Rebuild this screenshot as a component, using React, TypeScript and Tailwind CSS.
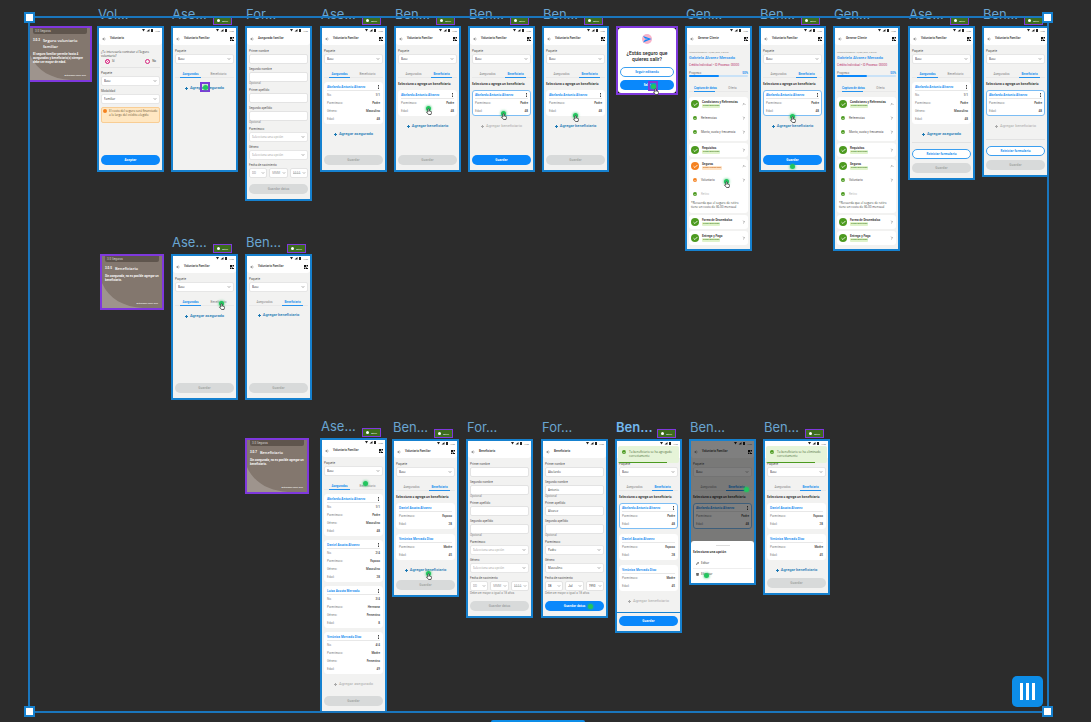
import { useId } from "react";
import type { ReactNode } from "react";
import clsx from "clsx";
import { ArrowLeft, Check, ChevronDown, ChevronRight, ChevronUp, Pencil, Trash2 } from "lucide-react";

type Person = { name: string; rows: [string, string][] };

const insured: Person[] = [
  { name: "Abelardo Antonio Alvarez", rows: [["No.", "1/1"], ["Parentesco:", "Padre"], ["Género:", "Masculino"], ["Edad:", "48"]] },
  { name: "Daniel Acosta Alvarez", rows: [["No.", "2/4"], ["Parentesco:", "Esposo"], ["Género:", "Masculino"], ["Edad:", "28"]] },
  { name: "Luisa Acosta Mercado", rows: [["No.", "3/4"], ["Parentesco:", "Hermana"], ["Género:", "Femenino"], ["Edad:", "8"]] },
  { name: "Verónica Mercado Diaz", rows: [["No.", "4/4"], ["Parentesco:", "Madre"], ["Género:", "Femenino"], ["Edad:", "49"]] },
];

const abelardo: Person = { name: "Abelardo Antonio Alvarez", rows: [["Parentesco:", "Padre"], ["Edad:", "48"]] };
const daniel: Person = { name: "Daniel Acosta Alvarez", rows: [["Parentesco:", "Esposo"], ["Edad:", "28"]] };
const veronica: Person = { name: "Verónica Mercado Diaz", rows: [["Parentesco:", "Madre"], ["Edad:", "45"]] };

function StatusBar() {
  return (
    <div className="flex h-[5px] shrink-0 items-center justify-end gap-[2px] pr-[2px] text-[2px] leading-[4px] text-[#666]">
      <svg className="h-[3px] w-[11px]" viewBox="0 0 11 3">
        <path d="M0 0h3L1.5 2.5zM4.5 2.5h3V0zM9 0h2v3H9z" fill="#222" />
      </svg>
      <span>12:30</span>
    </div>
  );
}

function Header({ title, qr = true }: { title: string; qr?: boolean }) {
  return (
    <header className="h-[17px] shrink-0 rounded-b-[3px] bg-white">
      <StatusBar />
      <div className="flex h-[11px] items-center gap-[4px] pl-[3px] pr-[2px]">
        <ArrowLeft className="size-[4px] text-black" strokeWidth={2} />
        <h2 className="flex-1 whitespace-nowrap text-[3px] font-semibold leading-[5px] text-[#444]">{title}</h2>
        {qr && (
          <svg className="size-[4px]" viewBox="0 0 8 8">
            <path d="M0 0h4v4H0zM5 0h3v3H5zM0 5h3v3H0zM4 5h2v1h2v2H4z" fill="#111" />
          </svg>
        )}
      </div>
    </header>
  );
}

function SelectField({ label, value, muted }: { label: string; value: string; muted?: boolean }) {
  const id = useId();
  return (
    <div>
      <label htmlFor={id} className="block text-[3px] leading-[5px] text-[#555]">{label}</label>
      <div className="relative">
        <select
          id={id}
          className={clsx(
            "block h-[10px] w-full appearance-none rounded-[2px] border border-[#e6e6e6] bg-white px-[2px] font-['Open_Sans',sans-serif] text-[3px] leading-[8px]",
            muted ? "text-[#999]" : "text-[#333]",
          )}
        >
          <option>{value}</option>
        </select>
        <ChevronDown className="pointer-events-none absolute right-[3px] top-[3px] size-[4px] text-[#555]" strokeWidth={3} />
      </div>
    </div>
  );
}

function TextField({ label, value = "", hint }: { label: string; value?: string; hint?: string }) {
  const id = useId();
  return (
    <div>
      <label htmlFor={id} className="block text-[3px] leading-[5px] text-[#555]">{label}</label>
      <input
        id={id}
        defaultValue={value}
        className="block h-[10px] w-full rounded-[2px] border border-[#e3e3e3] bg-white px-[2px] font-['Open_Sans',sans-serif] text-[3px] text-[#444]"
      />
      {hint && <p className="text-[3px] leading-[3px] text-[#888]">{hint}</p>}
    </div>
  );
}

function PillButton({ children, kind = "primary" }: { children: ReactNode; kind?: "primary" | "disabled" | "outline" }) {
  return (
    <button
      disabled={kind === "disabled"}
      className={clsx(
        "block h-[10px] w-full shrink-0 rounded-full font-['Open_Sans',sans-serif] text-[3px] font-bold leading-[8px]",
        kind === "primary" && "bg-[#0a88fb] text-white",
        kind === "disabled" && "bg-[#d8dada] text-[#a3a6a6]",
        kind === "outline" && "border border-[#3b9ff0] bg-white text-[#1a8eef]",
      )}
    >
      {children}
    </button>
  );
}

function AddLink({ children, muted }: { children: ReactNode; muted?: boolean }) {
  return (
    <button
      className={clsx(
        "flex w-full shrink-0 items-center justify-center gap-[2px] whitespace-nowrap text-[4px] leading-[6px]",
        muted ? "text-[#aaa]" : "font-medium text-[#1a78b4]",
      )}
    >
      <svg className="size-[3px]" viewBox="0 0 3 3">
        <path d="M1 0h1v1h1v1H2v1H1V2H0V1h1z" fill="currentColor" />
      </svg>
      {children}
    </button>
  );
}

function Tabs({ items, active }: { items: string[]; active: number }) {
  return (
    <div className="flex h-[8px] shrink-0 gap-[7px] border-b border-[#e9e9e9] px-[5px]">
      {items.map((item, i) => (
        <button
          key={item}
          className={clsx(
            "-mb-px h-[8px] min-w-0 flex-1 whitespace-nowrap border-b text-[3px] leading-[6px]",
            i === active ? "border-[#2492ee] font-bold text-[#2492ee]" : "border-transparent text-[#888]",
          )}
        >
          {item}
        </button>
      ))}
    </div>
  );
}

function PersonCard({ person, selected, menu = true }: { person: Person; selected?: boolean; menu?: boolean }) {
  return (
    <article
      className={clsx(
        "shrink-0 rounded-[3px] border bg-white px-[2px]",
        selected ? "border-[#7cbdf4]" : "border-white",
        person.rows.length === 4 ? "h-[42px]" : "h-[26px]",
      )}
    >
      <div className="flex h-[8px] items-center justify-between border-b border-[#e8e8e8]">
        <h3 className="whitespace-nowrap font-['Open_Sans',sans-serif] text-[3px] font-bold leading-[6px] text-[#1e90f0]">{person.name}</h3>
        {menu && (
          <svg className="h-[4px] w-[3px]" viewBox="0 0 3 4">
            <path d="M1 0h1v1H1zM1 1.500h1v1H1zM1 3h1v1H1z" fill="#444" />
          </svg>
        )}
      </div>
      <dl>
        {person.rows.map(([term, detail]) => (
          <div key={term} className="flex h-[8px] items-center justify-between text-[3px] leading-[6px]">
            <dt className="text-[#888]">{term}</dt>
            <dd className="font-medium text-[#444]">{detail}</dd>
          </div>
        ))}
      </dl>
    </article>
  );
}

type FamilyProps = {
  tab: 0 | 1;
  people?: Person[];
  selected?: boolean;
  menu?: boolean;
  addMuted?: boolean;
  save?: "primary" | "disabled" | "none";
  reset?: boolean;
  toast?: string;
  stickyFooter?: boolean;
  children?: ReactNode;
};

function FamilyScreen({ tab, people = [], selected, menu = true, addMuted, save = "disabled", reset, toast, stickyFooter, children }: FamilyProps) {
  const showAdd = save !== "none" || people.length === 0;
  return (
    <>
      {toast ? (
        <div className="h-[17px] shrink-0 bg-white">
          <StatusBar />
          <Toast text={toast} />
        </div>
      ) : (
        <Header title="Voluntario Familiar" />
      )}
      <div className="flex flex-1 flex-col px-[2px] pt-[4px]">
        <SelectField label="Paquete" value="Base" />
        <div className="h-[6px] shrink-0" />
        <Tabs items={["Asegurados", "Beneficiario"]} active={tab} />
        {tab === 1 && people.length > 0 && (
          <p className="mt-[4px] shrink-0 whitespace-nowrap font-['Open_Sans',sans-serif] text-[3px] font-bold leading-[5px] text-[#333]">
            Selecciona o agrega un beneficiario
          </p>
        )}
        <div className={clsx("flex shrink-0 flex-col", tab === 1 ? "gap-[5px] pt-[3px]" : "gap-[4px] pt-[4px]")}>
          {people.map((person, i) => (
            <PersonCard key={person.name} person={person} selected={selected && i === 0} menu={menu && (i === 0 || tab === 0)} />
          ))}
        </div>
        {showAdd && (
          <div className={people.length ? "mt-[7px]" : "mt-[3px]"}>
            <AddLink muted={addMuted}>{tab === 0 ? "Agregar asegurado" : "Agregar beneficiario"}</AddLink>
          </div>
        )}
        {save !== "none" && (
          <footer
            className={clsx(
              "mt-auto flex flex-col gap-[4px] pb-[5px]",
              reset && "border-t border-[#e2e2e2] pt-[6px]",
              stickyFooter && "-mx-[2px] border-t border-[#1681cf] px-[2px] pt-[3px]",
            )}
          >
            {reset && <PillButton kind="outline">Reiniciar formulario</PillButton>}
            <PillButton kind={save}>Guardar</PillButton>
          </footer>
        )}
      </div>
      {children}
    </>
  );
}

function Toast({ text }: { text: string }) {
  return (
    <div className="relative z-10 mx-px h-[17px] overflow-hidden rounded-[2px] bg-[#e6f4d8]">
      <div className="flex gap-[3px] pl-[4px] pr-px pt-[4px]">
        <CheckDot small />
        <p className="flex-1 font-['Open_Sans',sans-serif] text-[3px] leading-[4px] text-[#4d6b3a]">{text}</p>
      </div>
      <div className="absolute bottom-0 left-0 h-px w-4/5 bg-[#4c9a1f]" />
    </div>
  );
}

function VoluntaryScreen() {
  return (
    <>
      <Header title="Voluntario" qr={false} />
      <div className="flex flex-1 flex-col gap-[3px] px-[2px] pb-[5px] pt-[5px]">
        <fieldset className="h-[18px] border-b border-[#e4e4e4]">
          <legend className="font-['Open_Sans',sans-serif] text-[3px] leading-[4px] text-[#444]">¿Te interesaría contratar el Seguro voluntario?</legend>
          <div className="flex justify-between px-[4px] pt-px text-[3px] leading-[5px] text-[#444]">
            {["Sí", "No"].map((option, i) => (
              <label key={option} className="flex items-center gap-[2px]">
                <input
                  type="radio"
                  name="insurance"
                  defaultChecked={i === 0}
                  className="size-[5px] appearance-none rounded-full border border-[#d6247e] checked:bg-[#d6247e] checked:shadow-[inset_0_0_0_1px_#fff]"
                />
                {option}
              </label>
            ))}
          </div>
        </fieldset>
        <SelectField label="Paquete" value="Base" />
        <SelectField label="Modalidad" value="Familiar" />
        <div className="flex h-[16px] gap-[2px] rounded-[2px] border border-[#f8cd94] bg-[#ffe7c2] p-px">
          <span className="size-[4px] shrink-0 rounded-full bg-[#f5821f]" />
          <p className="font-['Open_Sans',sans-serif] text-[3px] leading-[4px] text-[#6b5535]">El costo del seguro será financiado a lo largo del crédito elegido</p>
        </div>
        <div className="mt-auto">
          <PillButton>Aceptar</PillButton>
        </div>
      </div>
    </>
  );
}

function FormScreen({ title, values = [], hint }: { title: string; values?: string[]; hint?: boolean }) {
  const filled = values.length > 0;
  return (
    <>
      <Header title={title} qr={false} />
      <div className="flex flex-1 flex-col gap-[3px] px-[2px] pb-[5px] pt-[4px]">
        <TextField label="Primer nombre" value={values[0]} />
        <TextField label="Segundo nombre" value={values[1]} hint="Opcional" />
        <TextField label="Primer apellido" value={values[2]} />
        <TextField label="Segundo apellido" hint="Opcional" />
        <SelectField label="Parentesco" value={values[3] ?? "Selecciona una opción"} muted={!filled} />
        <SelectField label="Género" value={values[4] ?? "Selecciona una opción"} muted={!filled} />
        <fieldset>
          <legend className="text-[3px] leading-[5px] text-[#555]">Fecha de nacimiento</legend>
          <div className="grid grid-cols-3 gap-[2px]">
            {[["Día", values[5] ?? "DD"], ["Mes", values[6] ?? "MMM"], ["Año", values[7] ?? "AAAA"]].map(([label, value]) => (
              <div key={label} className="relative">
                <select
                  aria-label={label}
                  className={clsx(
                    "block h-[10px] w-full appearance-none rounded-[2px] border border-[#e3e3e3] bg-white px-[2px] text-[3px] leading-[8px]",
                    filled ? "text-[#333]" : "text-[#999]",
                  )}
                >
                  <option>{value}</option>
                </select>
                <ChevronDown className="pointer-events-none absolute right-[2px] top-[3px] size-[4px] text-[#777]" strokeWidth={3} />
              </div>
            ))}
          </div>
          {hint && <p className="whitespace-nowrap text-[3px] leading-[4px] text-[#888]">Debe ser mayor o igual a 18 años</p>}
        </fieldset>
        <div className="mt-auto">
          <PillButton kind={filled ? "primary" : "disabled"}>Guardar datos</PillButton>
        </div>
      </div>
    </>
  );
}

function CheckDot({ small, warning }: { small?: boolean; warning?: boolean }) {
  return (
    <span
      className={clsx(
        "flex shrink-0 items-center justify-center rounded-full text-white",
        small ? "size-[4px]" : "size-[8px]",
        warning ? "bg-[#f58220]" : "bg-[#4c9a1f]",
      )}
    >
      <Check className={small ? "size-[3px]" : "size-[5px]"} strokeWidth={4} />
    </span>
  );
}

function Section({ title, warning, open, children }: { title: string; warning?: boolean; open?: boolean; children?: ReactNode }) {
  const Chevron = open ? ChevronUp : ChevronRight;
  return (
    <section className={clsx("shrink-0 rounded-[3px] bg-white px-[2px]", open && "pb-[2px]")}>
      <div className="flex h-[14px] items-center gap-[3px]">
        <CheckDot warning={warning} />
        <div className="min-w-0 flex-1">
          <h3 className="whitespace-nowrap text-[3px] font-bold leading-[4px] text-[#444]">{title}</h3>
          <span
            className={clsx(
              "block w-fit rounded-[1px] px-px font-['Open_Sans',sans-serif] text-[2px] font-semibold leading-[4px]",
              warning ? "bg-[#ffe3c4] text-[#c8640c]" : "bg-[#dff3ca] text-[#3f7d1b]",
            )}
          >
            {warning ? "Datos incompletos" : "Datos completos"}
          </span>
        </div>
        <Chevron className="size-[4px] text-[#444]" strokeWidth={3} />
      </div>
      {children}
    </section>
  );
}

function SectionRow({ label, warning, muted }: { label: string; warning?: boolean; muted?: boolean }) {
  return (
    <div className="flex h-[14px] items-center gap-[4px] pl-[2px] text-[3px] leading-[5px]">
      <CheckDot small warning={warning} />
      <span className={clsx("flex-1 whitespace-nowrap", muted ? "text-[#bbb]" : "text-[#555]")}>{label}</span>
      {!muted && <ChevronRight className="size-[4px] text-[#444]" strokeWidth={3} />}
    </div>
  );
}

function ClientScreen({ warning }: { warning?: boolean }) {
  return (
    <>
      <Header title="Generar Cliente" />
      <div className="flex flex-1 flex-col px-[2px] pt-[5px]">
        <p className="whitespace-nowrap text-[2px] leading-[4px] text-[#888]">Última actualización: 15/Mar/2023, 2:30 p.m.</p>
        <h3 className="whitespace-nowrap text-[4px] font-medium leading-[8px] text-[#1e90f0]">Gabriela Alvarez Mercado</h3>
        <p className="whitespace-nowrap text-[3px] leading-[7px] text-[#b8326f]">Crédito Individual • ID Proceso: 00000</p>
        <div className="flex justify-between pt-[2px] text-[3px] leading-[4px] text-[#777]">
          <span>Progreso</span>
          <span className="font-bold text-[#1e90f0]">50%</span>
        </div>
        <div className="mb-[7px] h-[2px] rounded-full bg-[#c9e2f7]">
          <div className="h-[2px] w-1/2 rounded-full bg-[#0a88fb]" />
        </div>
        <Tabs items={["Captura de datos", "Oferta"]} active={0} />
        <div className="flex flex-col gap-[2px] pt-[5px]">
          <Section title="Condiciones y Referencias" open>
            <SectionRow label="Referencias" />
            <SectionRow label="Monto, cuota y frecuencia" />
          </Section>
          <Section title="Requisitos" />
          <Section title="Seguros" warning={warning} open>
            <SectionRow label="Voluntario" warning={warning} />
            <SectionRow label="Retiro" muted />
            <p className="h-[10px] whitespace-nowrap font-['Open_Sans',sans-serif] text-[3px] leading-[4px] text-[#444]">
              *Recuerda que el seguro de retiro
              <br />
              tiene un costo de $6.00 mensual
            </p>
          </Section>
          <Section title="Forma de Desembolso" />
          <Section title="Entrega y Pago" />
        </div>
      </div>
    </>
  );
}

function OptionsSheet() {
  return (
    <div className="absolute inset-0 flex flex-col justify-end bg-black/50">
      <div className="h-[42px] rounded-t-[3px] bg-white px-[2px] font-['Open_Sans',sans-serif] text-[3px]">
        <div className="mx-auto mt-[4px] h-px w-[14px] bg-[#ddd]" />
        <p className="mt-[4px] font-bold leading-[5px] text-[#333]">Selecciona una opción</p>
        <button className="mt-[4px] flex h-[10px] w-full items-center gap-[2px] border-b border-[#eee] pl-[3px] text-[#333]">
          <Pencil className="size-[3px]" strokeWidth={4} /> Editar
        </button>
        <button className="flex h-[10px] w-full items-center gap-[2px] pl-[3px] text-[#333]">
          <Trash2 className="size-[3px]" strokeWidth={4} /> Eliminar
        </button>
      </div>
    </div>
  );
}

type Artboard = { label: string; x: number; y: number; h: number; badge?: boolean; active?: boolean; screen: ReactNode };

const artboards: Artboard[] = [
  { label: "Vol...", x: 97, y: 26, h: 146, screen: <VoluntaryScreen /> },
  { label: "Ase...", x: 171, y: 26, h: 146, badge: true, screen: <FamilyScreen tab={0} save="none" /> },
  { label: "For...", x: 245, y: 26, h: 175, screen: <FormScreen title="Asegurado familiar" /> },
  { label: "Ase...", x: 320, y: 26, h: 146, badge: true, screen: <FamilyScreen tab={0} people={insured.slice(0, 1)} /> },
  { label: "Ben...", x: 394, y: 26, h: 146, badge: true, screen: <FamilyScreen tab={1} people={[abelardo]} /> },
  { label: "Ben...", x: 468, y: 26, h: 146, badge: true, screen: <FamilyScreen tab={1} people={[abelardo]} selected addMuted save="primary" /> },
  { label: "Ben...", x: 542, y: 26, h: 146, badge: true, screen: <FamilyScreen tab={1} people={[abelardo]} /> },
  { label: "Gen...", x: 685, y: 26, h: 225, screen: <ClientScreen warning /> },
  { label: "Ben...", x: 759, y: 26, h: 146, badge: true, screen: <FamilyScreen tab={1} people={[abelardo]} selected save="primary" /> },
  { label: "Gen...", x: 833, y: 26, h: 225, screen: <ClientScreen /> },
  { label: "Ase...", x: 908, y: 26, h: 154, badge: true, screen: <FamilyScreen tab={0} people={insured.slice(0, 1)} reset /> },
  { label: "Ben...", x: 982, y: 26, h: 151, badge: true, screen: <FamilyScreen tab={1} people={[abelardo]} selected addMuted reset /> },
  { label: "Ase...", x: 171, y: 254, h: 146, badge: true, screen: <FamilyScreen tab={0} /> },
  { label: "Ben...", x: 245, y: 254, h: 146, badge: true, screen: <FamilyScreen tab={1} /> },
  { label: "Ase...", x: 320, y: 438, h: 275, badge: true, screen: <FamilyScreen tab={0} people={insured} addMuted /> },
  { label: "Ben...", x: 392, y: 439, h: 158, badge: true, screen: <FamilyScreen tab={1} people={[daniel, veronica]} menu={false} /> },
  { label: "For...", x: 466, y: 439, h: 179, screen: <FormScreen title="Beneficiario" hint /> },
  { label: "For...", x: 541, y: 439, h: 179, screen: <FormScreen title="Beneficiario" values={["Abelardo", "Antonio", "Alvarez", "Padre", "Masculino", "08", "Jul", "1993"]} hint /> },
  { label: "Ben...", x: 615, y: 439, h: 194, badge: true, active: true, screen: <FamilyScreen tab={1} people={[abelardo, daniel, veronica]} selected addMuted save="primary" stickyFooter toast="Tu beneficiario se ha agregado correctamente" /> },
  { label: "Ben...", x: 689, y: 439, h: 146, screen: <FamilyScreen tab={1} people={[abelardo]} selected save="none"><OptionsSheet /></FamilyScreen> },
  { label: "Ben...", x: 763, y: 439, h: 156, badge: true, screen: <FamilyScreen tab={1} people={[daniel, veronica]} menu={false} toast="Tu beneficiario se ha eliminado correctamente" /> },
];

const notes = [
  { x: 28, y: 26, number: "3.0.3", title: "Seguro voluntario familiar", text: "El seguro familiar permite hasta 4 asegurados y beneficiario(s) siempre debe ser mayor de edad." },
  { x: 100, y: 254, number: "3.0.5", title: "Beneficiario", text: "Sin asegurado, no es posible agregar un beneficiario." },
  { x: 245, y: 438, number: "3.0.7", title: "Beneficiario", text: "Sin asegurado, no es posible agregar un beneficiario." },
];

const taps = [
  { x: 205, y: 87, boxed: true },
  { x: 428, y: 108, hand: true },
  { x: 503, y: 113, hand: true },
  { x: 575, y: 115, hand: true },
  { x: 653, y: 86, boxed: true, hand: true },
  { x: 726, y: 181, hand: true },
  { x: 792, y: 116, hand: true },
  { x: 792, y: 166 },
  { x: 221, y: 303, hand: true },
  { x: 365, y: 483 },
  { x: 428, y: 573, hand: true },
  { x: 590, y: 606 },
  { x: 746, y: 489 },
  { x: 706, y: 575 },
];

function ArtboardFrame({ board }: { board: Artboard }) {
  return (
    <div className="absolute w-[67px]" style={{ left: board.x, top: board.y - 20 }}>
      <div className="flex h-[20px] items-start justify-between">
        <span
          className={clsx(
            "pl-px font-[Inter,sans-serif] text-[13px] leading-[16px]",
            board.active ? "font-semibold text-[#72b8ef]" : "text-[#69a5d1]",
          )}
        >
          {board.label}
        </span>
        {board.badge && (
          <span className="-ml-[10px] mr-[6px] mt-[10px] flex h-[9px] w-[19px] shrink-0 items-center justify-center gap-[2px] border border-[#7f38dd] bg-[#3d6c1d] text-[2px] leading-[4px] text-white">
            <span className="size-[3px] rounded-full bg-white" />
            Activo
          </span>
        )}
      </div>
      <div
        className="relative flex flex-col overflow-hidden border-2 border-[#1681cf] bg-[#f2f2f1]"
        style={{ height: board.h }}
      >
        {board.screen}
      </div>
    </div>
  );
}

function Note({ note }: { note: (typeof notes)[number] }) {
  return (
    <div
      className="absolute flex h-[56px] w-[64px] flex-col overflow-hidden border-2 border-[#7f38dd] bg-[#83776e] text-white"
      style={{ left: note.x, top: note.y }}
    >
      <svg className="absolute inset-0 size-full" viewBox="0 0 60 52" preserveAspectRatio="none">
        <path d="M0 27C7 43 22 51 41 52H0Z" fill="#9e948d" />
      </svg>
      <div className="relative mx-[3px] h-[6px] shrink-0 rounded-b-[2px] bg-[#5f554d] px-[2px] text-[3px] leading-[6px] text-[#d8d2cd]">3.0 Seguros</div>
      <div className="relative flex gap-[3px] px-[3px] pt-[4px]">
        <span className="text-[3px] font-bold leading-[5px]">{note.number}</span>
        <h2 className="font-['Open_Sans',sans-serif] text-[4px] font-semibold leading-[6px]">{note.title}</h2>
      </div>
      <p className="relative px-[3px] pt-[2px] text-[3px] font-semibold leading-[4px]">{note.text}</p>
      <span className="relative mt-auto pb-[3px] pr-[4px] text-right text-[2px] leading-[4px]">Actualizado: Mayo 2023</span>
    </div>
  );
}

function ExitDialog() {
  return (
    <div className="absolute left-[616px] top-[26px] h-[69px] w-[62px] border-2 border-[#7f38dd] bg-black">
      <div className="flex h-full flex-col items-center rounded-[3px] bg-white px-[2px] pb-[3px] pt-[6px]">
        <svg className="size-[10px] shrink-0" viewBox="0 0 20 20">
          <circle cx="10" cy="10" r="10" fill="#f6b3cb" />
          <path d="M2 4 19 10 2 17 6 11.500 13 10 6 9Z" fill="#0a88fb" />
        </svg>
        <h2 className="mt-[6px] whitespace-nowrap text-center text-[5px] font-medium leading-[6px] text-[#222]">
          ¿Estás seguro que
          <br />
          quieres salir?
        </h2>
        <div className="mt-auto flex w-full flex-col gap-[3px]">
          <PillButton kind="outline">Seguir editando</PillButton>
          <PillButton>Salir</PillButton>
        </div>
      </div>
    </div>
  );
}

function Tap({ tap }: { tap: { x: number; y: number; hand?: boolean; boxed?: boolean } }) {
  return (
    <div
      className={clsx("absolute flex size-[10px] items-center justify-center", tap.boxed && "border-2 border-[#7f38dd]")}
      style={{ left: tap.x - 5, top: tap.y - 5 }}
    >
      <span className="size-[5px] shrink-0 rounded-full bg-[#22c55e] shadow-[0_0_2px_1px_rgba(34,197,94,0.4)]" />
      {tap.hand && (
        <svg className="absolute left-[3px] top-[5px] h-[7px] w-[6px]" viewBox="0 0 12 14">
          <path d="M4 8V2q1.500-2 2.500 0v4l4 1q1 .5.500 2L10 13H5L1 8q1-1.500 3 0Z" fill="#fff" stroke="#333" strokeWidth="1.500" />
        </svg>
      )}
    </div>
  );
}

const handle = "absolute size-[11px] border-2 border-[#1681cf] bg-white";

export default function App() {
  return (
    <main className="relative min-h-screen overflow-hidden bg-[#2c2c2c] font-[Roboto,sans-serif]">
      {notes.map((note) => (
        <Note key={note.number} note={note} />
      ))}
      {artboards.map((board, i) => (
        <ArtboardFrame key={i} board={board} />
      ))}
      <ExitDialog />
      {taps.map((tap, i) => (
        <Tap key={i} tap={tap} />
      ))}

      {/* Selection bounds */}
      <div className="pointer-events-none absolute left-[28px] top-[16px] h-[697px] w-[1021px] border-2 border-[#1a76bd]">
        <span className={clsx(handle, "-left-[6px] -top-[6px]")} />
        <span className={clsx(handle, "-right-[6px] -top-[6px]")} />
        <span className={clsx(handle, "-bottom-[6px] -left-[6px]")} />
        <span className={clsx(handle, "-bottom-[6px] -right-[6px]")} />
      </div>

      <button
        aria-label="Distribute columns"
        className="absolute left-[1012px] top-[676px] flex size-[31px] items-center justify-center gap-[3px] rounded-[5px] bg-[#0d8de8]"
      >
        <span className="h-[17px] w-[3px] bg-white" />
        <span className="h-[17px] w-[3px] bg-white" />
        <span className="h-[17px] w-[3px] bg-white" />
      </button>
      <div className="absolute left-[491px] top-[720px] h-[2px] w-[94px] rounded-t-[2px] bg-[#0d8de8]" />
    </main>
  );
}
